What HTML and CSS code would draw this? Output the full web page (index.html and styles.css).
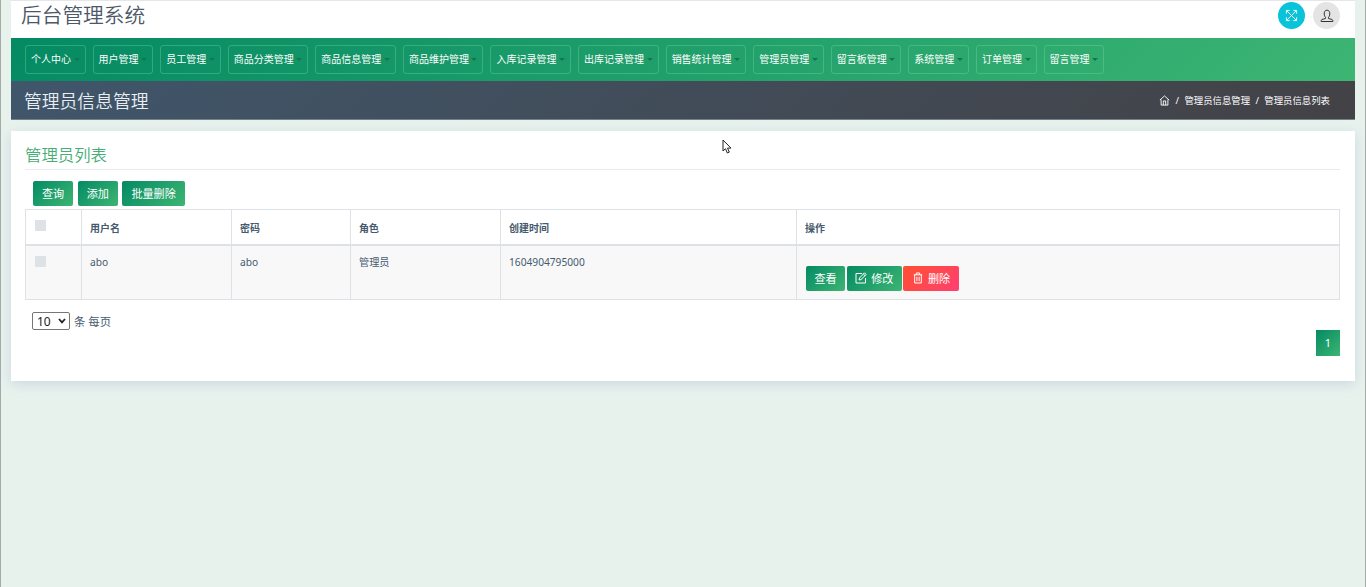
FILE: index.html
```
<!DOCTYPE html>
<html lang="zh-CN">
<head>
    <meta charset="UTF-8">
    <meta name="viewport" content="width=device-width, initial-scale=1.0">
    <title>后台管理系统</title>
    <link rel="stylesheet" href="styles.css">
</head>
<body>
    <div class="wrapper">
        <header class="top-bar">
            <h1>后台管理系统</h1>
            <div class="top-actions">
                <a class="round-btn fullscreen" href="#">
                    <svg viewBox="0 0 14 14" width="13" height="13"><path d="M2 2l10 10M12 2L2 12M1.500 5V1.500H5M9 1.500h3.500V5M12.500 9v3.500H9M5 12.500H1.500V9"/></svg>
                </a>
                <a class="round-btn user" href="#">
                    <svg viewBox="0 0 14 14" width="14" height="14"><path d="M5.500 8.300C4.400 7 4 5.500 4.300 3.800 4.600 2 5.600 1.200 7 1.200s2.400.8 2.700 2.600C10 5.500 9.600 7 8.500 8.300v1.200l3.600 1c.5.300.8.900.8 2H1.100c0-1.100.3-1.700.8-2l3.600-1z"/></svg>
                </a>
            </div>
        </header>

        <nav class="menu">
            <a href="#">个人中心</a>
            <a href="#">用户管理</a>
            <a href="#">员工管理</a>
            <a href="#">商品分类管理</a>
            <a href="#">商品信息管理</a>
            <a href="#">商品维护管理</a>
            <a href="#">入库记录管理</a>
            <a href="#">出库记录管理</a>
            <a href="#">销售统计管理</a>
            <a href="#">管理员管理</a>
            <a href="#">留言板管理</a>
            <a href="#">系统管理</a>
            <a href="#">订单管理</a>
            <a href="#">留言管理</a>
        </nav>

        <div class="page-title">
            <h2>管理员信息管理</h2>
            <div class="breadcrumb">
                <svg viewBox="0 0 12 12" width="11" height="11"><path d="M1 5.500L6 1l5 4.500M2.300 5v6h7.400V5M4.700 11V6.500h2.600V11"/></svg>
                <span>/</span>
                <a href="#">管理员信息管理</a>
                <span>/</span>
                <a href="#">管理员信息列表</a>
            </div>
        </div>

        <main class="card">
            <h3>管理员列表</h3>
            <div class="toolbar">
                <button class="btn">查询</button>
                <button class="btn">添加</button>
                <button class="btn">批量删除</button>
            </div>
            <table>
                <thead>
                    <tr>
                        <th class="col-check"><span class="check"></span></th>
                        <th class="col-name">用户名</th>
                        <th class="col-pass">密码</th>
                        <th class="col-role">角色</th>
                        <th class="col-time">创建时间</th>
                        <th>操作</th>
                    </tr>
                </thead>
                <tbody>
                    <tr>
                        <td><span class="check"></span></td>
                        <td>abo</td>
                        <td>abo</td>
                        <td>管理员</td>
                        <td>1604904795000</td>
                        <td>
                            <div class="row-actions">
                                <button class="btn">查看</button>
                                <button class="btn">
                                    <svg viewBox="0 0 12 12" width="12" height="12"><path d="M7 1.500H1v9.500h9.500V6M4 8l.5-2L9.500.8l1.700 1.700L6 7.600zM8.300 2l1.700 1.700"/></svg>
                                    修改
                                </button>
                                <button class="btn danger">
                                    <svg viewBox="0 0 12 12" width="12" height="12"><path d="M1.800 2.800h8.400M4.300 2.800V1h3.400v1.800M2.700 2.800V11h6.600V2.800M4.900 4.800v4.400M7.100 4.800v4.400"/></svg>
                                    删除
                                </button>
                            </div>
                        </td>
                    </tr>
                </tbody>
            </table>
            <div class="page-size">
                <div class="select">
                    <span>10</span>
                    <svg viewBox="0 0 8 6" width="8" height="6"><path d="M1 1l3 3.300L7 1"/></svg>
                </div>
                <span>条 每页</span>
            </div>
            <div class="pagination"><a href="#">1</a></div>
        </main>
    </div>

    <svg class="cursor" viewBox="0 0 10 15" width="10" height="15"><path d="M1 1v11l2.500-2.300L5.300 14l2-.9-1.800-4H9z"/></svg>
</body>
</html>
```
FILE: styles.css
```
* {
    margin: 0;
    padding: 0;
    box-sizing: border-box;
}

body {
    height: 587px;
    overflow: hidden;
    background: #e8f2ed;
    border-left: 1px solid #a3aaa7;
    border-right: 1px solid #a3aaa7;
    padding: 0 10px;
    color: #455a6e;
    font-family: "Noto Sans", "Noto Sans CJK SC", sans-serif;
    font-size: 10.2px;
}

a {
    color: inherit;
    text-decoration: none;
}

svg {
    fill: none;
    stroke: currentColor;
}

h1, h2, h3 {
    font-weight: 350;
}

.top-bar {
    height: 38px;
    background: #fff;
    border-top: 1px solid #e4e6e8;
    display: flex;
    justify-content: space-between;
    padding: 0 15px 0 10px;
}

h1 {
    font-size: 20.7px;
    line-height: 28px;
    color: #4c5768;
}

.top-actions {
    display: flex;
    gap: 8px;
    padding-top: 1px;
}

.round-btn {
    width: 27px;
    height: 27px;
    border-radius: 50%;
    display: flex;
    align-items: center;
    justify-content: center;
}

.fullscreen {
    background: #08c3d9;
    color: #fff;
}

.user {
    background: #e5e4e4;
    color: #333;
}

/* main menu */
.menu {
    height: 43px;
    display: flex;
    align-items: flex-start;
    gap: 7px;
    padding: 7px 14px;
    background: linear-gradient(135deg, #048a63, #3db573);
}

.menu a {
    height: 29px;
    line-height: 27px;
    font-size: 10px;
    color: #fff;
    border: 1px solid rgba(120, 220, 160, 0.35);
    border-radius: 3px;
    padding: 0 5px;
    display: flex;
    align-items: center;
}

.menu a::after {
    content: "";
    margin: 0 0 1px 2.58px;
    border: 3px solid transparent;
    border-top-color: #14774c;
    border-bottom: 0;
}

.page-title {
    height: 39px;
    display: flex;
    align-items: center;
    justify-content: space-between;
    padding: 0 25px 0 13px;
    background: linear-gradient(135deg, #40566b, #434246);
    border-bottom: 1px solid #74808a;
    color: #fff;
}

h2 {
    font-size: 17.8px;
    color: #e9eef2;
}

.breadcrumb {
    display: flex;
    align-items: center;
    gap: 5.4px;
    font-size: 9.4px;
}

.card {
    height: 250px;
    margin-top: 11px;
    padding: 12px 15px 0 14px;
    background: #fff;
    box-shadow: 0 3px 12px rgba(120, 140, 190, 0.25);
}

h3 {
    height: 27px;
    line-height: 23px;
    font-size: 16.4px;
    color: #46ae75;
    border-bottom: 1px solid #e9ebed;
}

.toolbar {
    display: flex;
    gap: 4.5px;
    padding: 11px 8px 3px;
}

.btn {
    height: 25px;
    padding: 0 9px 1px;
    border: 0;
    border-radius: 2px;
    background: linear-gradient(135deg, #048a63, #3db573);
    color: #fff;
    font-family: inherit;
    font-size: 11.1px;
    display: flex;
    align-items: center;
    gap: 4px;
}

.danger {
    background: linear-gradient(135deg, #ff5030, #ff3f72);
}

/* list */
table {
    width: 100%;
    border-collapse: collapse;
    table-layout: fixed;
}

th, td {
    border: 1px solid #dee1e6;
    padding: 9px 8px 0;
    text-align: left;
    vertical-align: top;
    line-height: 15px;
}

th {
    padding-top: 11px;
    border-bottom: 2px solid #dee1e6;
    font-size: 10px;
    font-weight: 600;
}

thead tr {
    height: 35px;
}

td {
    height: 55px;
    background: #f8f8f9;
}

.col-check { width: 56px; }
.col-name { width: 150px; }
.col-pass { width: 119px; }
.col-role { width: 150px; }
.col-time { width: 296px; }

.check {
    display: block;
    width: 11px;
    height: 11px;
    margin: 1px 0 0 1px;
    background: #dee2e7;
}

th .check {
    margin-top: -1px;
}

.row-actions {
    display: flex;
    gap: 1.5px;
    padding: 11px 0 0 1px;
}

.row-actions .btn {
    padding: 0 8.5px;
}

.page-size {
    display: flex;
    align-items: center;
    gap: 4px;
    height: 18px;
    margin: 12px 0 0 7px;
    font-size: 11.4px;
}

.select {
    width: 38px;
    height: 18px;
    border: 1px solid #767676;
    border-radius: 2px;
    background: #fff;
    color: #222;
    font-size: 12px;
    display: flex;
    align-items: center;
    justify-content: space-between;
    padding: 0 3px 0 4px;
}

.select svg {
    stroke-width: 1.8;
}

.pagination {
    display: flex;
    justify-content: flex-end;
}

.pagination a {
    width: 24px;
    height: 26px;
    line-height: 26px;
    text-align: center;
    color: #fff;
    font-size: 11px;
    background: linear-gradient(135deg, #048a63, #3db573);
}

.cursor {
    position: absolute;
    left: 722px;
    top: 139px;
    fill: #fff;
    stroke: #222;
}
```
